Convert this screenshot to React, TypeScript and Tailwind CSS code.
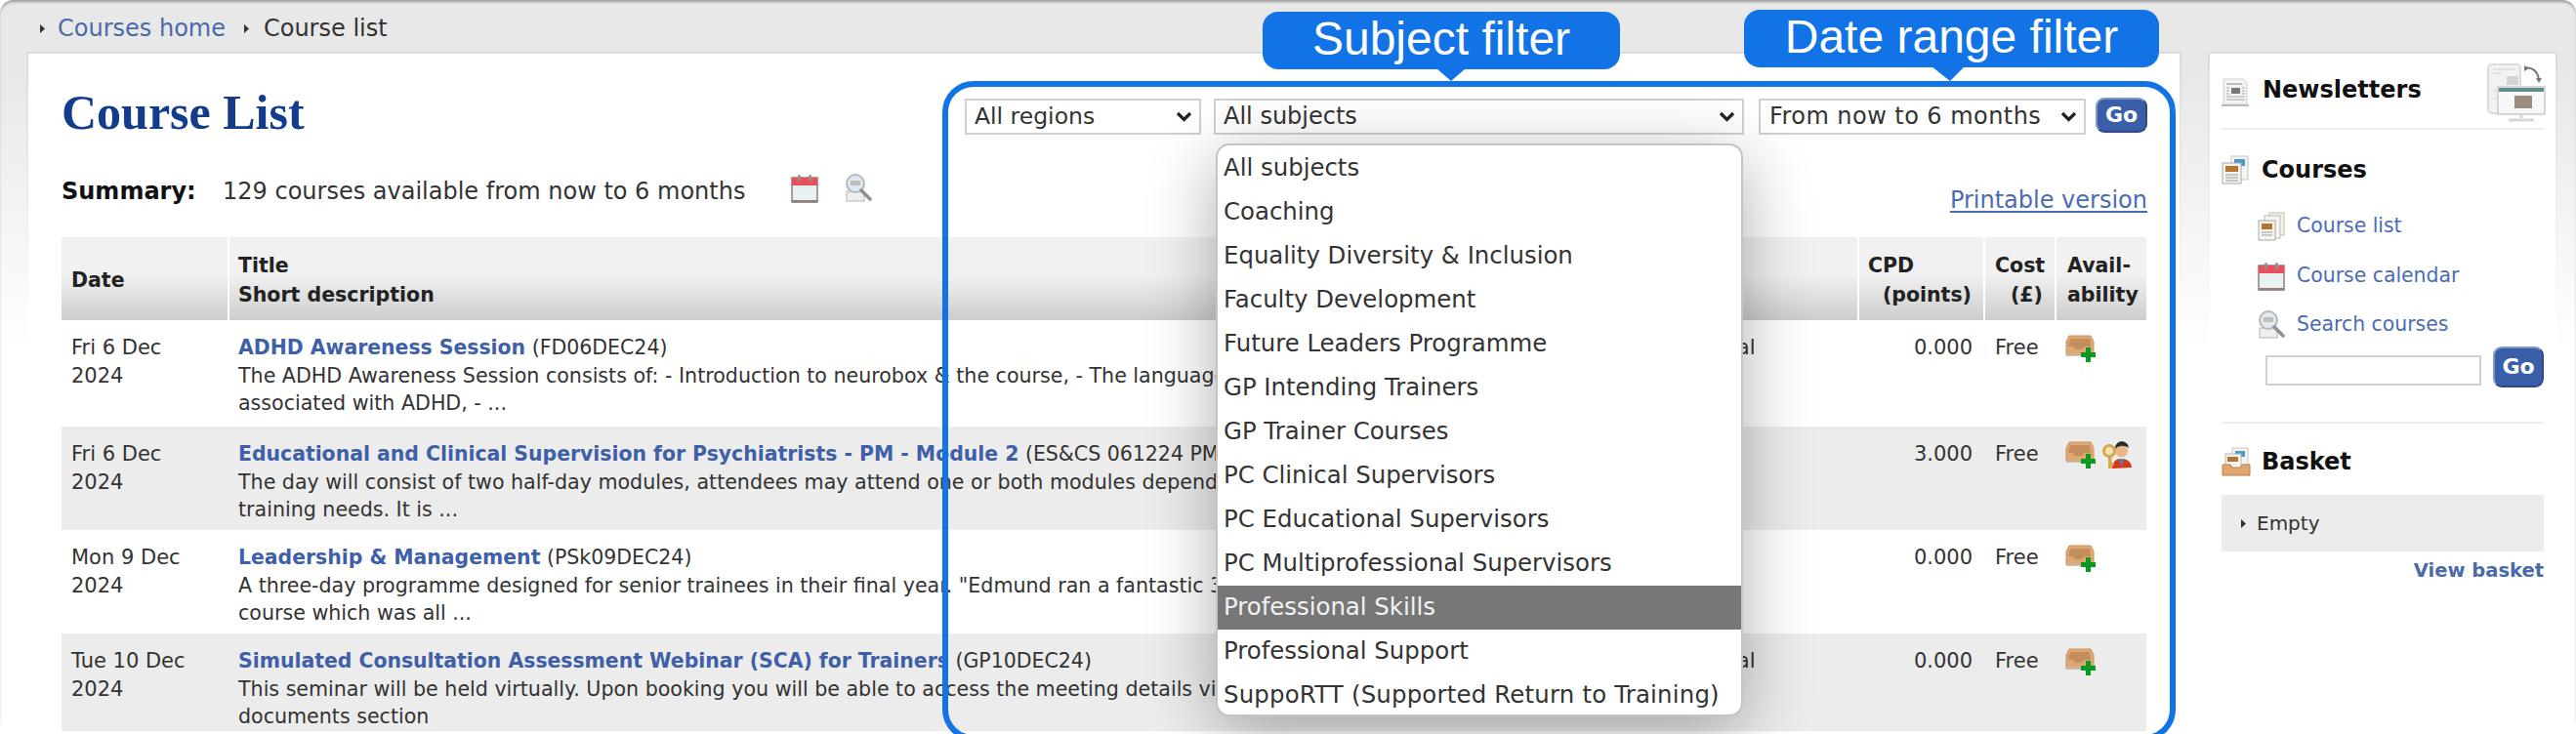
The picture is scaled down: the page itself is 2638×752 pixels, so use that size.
import React from "react";

const CalendarIcon = () => (
  <svg width="28" height="30" viewBox="0 0 28 30" className="block">
    <rect x="1" y="4" width="26" height="25" fill="#eaf1f1" stroke="#8f7f7d" strokeWidth="1.5" />
    <rect x="1" y="4" width="26" height="8" fill="#e8505b" />
    <rect x="7" y="1" width="3" height="7" rx="1.5" fill="#9a8d8d" />
    <rect x="18" y="1" width="3" height="7" rx="1.5" fill="#9a8d8d" />
    <rect x="1" y="27" width="26" height="2.5" fill="#8f7f7d" />
  </svg>
);

const SearchIcon = () => (
  <svg width="28" height="30" viewBox="0 0 28 30" className="block">
    <rect x="2" y="18" width="18" height="10" fill="#eeeeee" stroke="#b5b5b5" />
    <circle cx="11" cy="10" r="9" fill="#dfe9f1" stroke="#b4b9bd" strokeWidth="2" />
    <rect x="6" y="7" width="10" height="5" fill="#bfbfb8" />
    <path d="M17 17 L26 26" stroke="#8d9295" strokeWidth="3.5" strokeLinecap="round" />
  </svg>
);

const TrayAdd = () => (
  <svg width="31" height="28" viewBox="0 0 31 28" className="block">
    <path d="M4 1 H26 L29 7 V21 H1 V7 Z" fill="#dfa873" stroke="#c99260" />
    <path d="M5 4 H25 L26 12 H19 L17 15 H10 L8 12 H3 Z" fill="#b98454" opacity="0.75" />
    <rect x="1" y="19" width="28" height="3" fill="#c4c0bb" opacity="0.5" />
    <rect x="21" y="13" width="5" height="15" fill="#0a9a22" />
    <rect x="16" y="18" width="15" height="5" fill="#0a9a22" />
  </svg>
);

const PersonKey = () => (
  <svg width="30" height="30" viewBox="0 0 30 30" className="block">
    <path d="M10 29 C10 22 14 19 19 19 C26 19 30 23 30 28 Z" fill="#d8381a" />
    <path d="M17 19 L19.5 27 L22 19 Z" fill="#4a86c8" />
    <circle cx="19.5" cy="11" r="6.5" fill="#eab788" />
    <path d="M13 9 C13 -1 26 -1 27 8 C23 5 17 5 13 9 Z" fill="#2b2b2b" />
    <circle cx="7" cy="11" r="5.5" fill="#f3e2b0" stroke="#d3a94f" strokeWidth="3" />
    <rect x="6" y="15" width="3.5" height="14" fill="#d3a94f" />
    <rect x="9" y="23" width="3" height="3" fill="#d3a94f" />
  </svg>
);

const Newspaper = () => (
  <svg width="28" height="29" viewBox="0 0 28 29" className="block">
    <path d="M2 1 H22 L26 5 V27 H2 Z" fill="#f3f3f1" stroke="#cfcfcb" />
    <rect x="5" y="5" width="16" height="2" fill="#bdbdb8" />
    <rect x="10" y="10" width="9" height="6" fill="#777" />
    <path d="M5 10 H8 M5 13 H8 M5 16 H8 M21 10 H24 M21 13 H24 M21 16 H24 M5 19 H24 M5 22 H24" stroke="#c2c2bd" strokeWidth="1.5" />
    <rect x="0" y="27" width="28" height="2" fill="#bcbcb8" />
  </svg>
);

const CoursesIcon = () => (
  <svg width="28" height="30" viewBox="0 0 28 30" className="block">
    <rect x="10" y="1" width="17" height="24" fill="#f4f4f2" stroke="#c6c6c2" />
    <rect x="13" y="4" width="11" height="7" fill="#4b9ac9" />
    <rect x="1" y="8" width="19" height="21" fill="#f4f4f2" stroke="#a9a9a5" />
    <rect x="4" y="11" width="13" height="6" fill="#b5742f" />
    <path d="M4 20 H17 M4 23 H17 M4 26 H17" stroke="#b8b8b3" strokeWidth="1.5" />
  </svg>
);

const CourseListIcon = () => (
  <svg width="28" height="30" viewBox="0 0 28 30" className="block">
    <rect x="12" y="1" width="15" height="23" fill="#f4f1ea" stroke="#c9bba5" />
    <rect x="7" y="4" width="16" height="23" fill="#f4f4f2" stroke="#bcbcb8" />
    <rect x="1" y="9" width="17" height="20" fill="#f4f4f2" stroke="#a9a9a5" />
    <rect x="4" y="12" width="11" height="6" fill="#b5742f" />
    <path d="M4 21 H15 M4 24 H15" stroke="#b8b8b3" strokeWidth="1.5" />
  </svg>
);

const BasketIcon = () => (
  <svg width="30" height="30" viewBox="0 0 30 30" className="block">
    <rect x="11" y="1" width="16" height="20" fill="#f4f4f2" stroke="#c6c6c2" />
    <rect x="14" y="4" width="10" height="6" fill="#4b9ac9" />
    <rect x="4" y="7" width="16" height="16" fill="#f4f4f2" stroke="#b4b4af" />
    <rect x="6" y="10" width="11" height="5" fill="#b5742f" />
    <path d="M1 18 H9 L11 21 H19 L21 18 H29 V29 H1 Z" fill="#e0a772" stroke="#bd7f47" />
  </svg>
);

const MonitorSwap = () => (
  <svg width="60" height="60" viewBox="0 0 60 60" className="block">
    <rect x="1" y="1" width="33" height="50" rx="4" fill="#f2f2f2" stroke="#dcdcdc" strokeWidth="2" />
    <rect x="20" y="13" width="12" height="9" fill="#d4d4d4" />
    <path d="M6 6 H29 M6 10 H14 M6 28 H10 M6 36 H10" stroke="#dddddd" strokeWidth="1.5" />
    <rect x="11" y="24" width="48" height="28" fill="#f8f8f8" stroke="#d6d6d6" strokeWidth="2" />
    <rect x="12" y="25" width="46" height="4" fill="#5f8f8c" />
    <rect x="28" y="33" width="18" height="13" fill="#9a8d80" />
    <path d="M35 52 V56 M22 58 H48" stroke="#d6d6d6" strokeWidth="3" />
    <path d="M38 5 C46 3 52 8 53 17" stroke="#777" strokeWidth="2" fill="none" />
    <path d="M38 2 L38 8 L43 5 Z M50 15 H56 L53 20 Z" fill="#777" />
  </svg>
);

const Tri = () => (
  <svg width="5" height="9" viewBox="0 0 5 9" className="block shrink-0">
    <path d="M0 0 L5 4.5 L0 9 Z" fill="#333" />
  </svg>
);

const Chevron = () => (
  <svg width="17" height="11" viewBox="0 0 17 11" className="absolute right-[9px] top-[13px] pointer-events-none">
    <path d="M2 2 L8.5 8.5 L15 2" fill="none" stroke="#222" strokeWidth="3.2" />
  </svg>
);

function Select({ value, className, text }: { value: string; className: string; text: string }) {
  return (
    <div className={`relative h-[37px] ${className}`}>
      <select
        defaultValue={value}
        className={`w-full h-full appearance-none bg-white border-2 border-[#d0d0d0] text-[#333] font-['DejaVu_Sans',sans-serif] ${text}`}
      >
        <option>{value}</option>
      </select>
      <Chevron />
    </div>
  );
}

function GoButton({ className }: { className: string }) {
  return (
    <button className={`bg-[#3a5fa8] rounded-[9px] border-2 border-[#7d97c9] border-b-[#2d4a86] border-r-[#2d4a86] text-white font-bold text-[22px] leading-none ${className}`}>
      Go
    </button>
  );
}

type Row = {
  date: string;
  title: string;
  code: string;
  desc: [string, string];
  region: string;
  cpd: string;
  alt: boolean;
  key: boolean;
  h: string;
};

const rows: Row[] = [
  {
    date: "Fri 6 Dec",
    title: "ADHD Awareness Session",
    code: "(FD06DEC24)",
    desc: ["The ADHD Awareness Session consists of: - Introduction to neurobox & the course, - The language", "associated with ADHD, - ..."],
    region: "National",
    cpd: "0.000",
    alt: false,
    key: false,
    h: "h-[109px]",
  },
  {
    date: "Fri 6 Dec",
    title: "Educational and Clinical Supervision for Psychiatrists - PM - Module 2",
    code: "(ES&CS 061224 PM)",
    desc: ["The day will consist of two half-day modules, attendees may attend one or both modules depending on their", "training needs. It is ..."],
    region: "",
    cpd: "3.000",
    alt: true,
    key: true,
    h: "h-[106px]",
  },
  {
    date: "Mon 9 Dec",
    title: "Leadership & Management",
    code: "(PSk09DEC24)",
    desc: ["A three-day programme designed for senior trainees in their final year. \"Edmund ran a fantastic 3-day", "course which was all ..."],
    region: "",
    cpd: "0.000",
    alt: false,
    key: false,
    h: "h-[106px]",
  },
  {
    date: "Tue 10 Dec",
    title: "Simulated Consultation Assessment Webinar (SCA) for Trainers",
    code: "(GP10DEC24)",
    desc: ["This seminar will be held virtually. Upon booking you will be able to access the meeting details via", "documents section"],
    region: "National",
    cpd: "0.000",
    alt: true,
    key: false,
    h: "h-[100px]",
  },
];

const subjects = [
  "All subjects",
  "Coaching",
  "Equality Diversity & Inclusion",
  "Faculty Development",
  "Future Leaders Programme",
  "GP Intending Trainers",
  "GP Trainer Courses",
  "PC Clinical Supervisors",
  "PC Educational Supervisors",
  "PC Multiprofessional Supervisors",
  "Professional Skills",
  "Professional Support",
  "SuppoRTT (Supported Return to Training)",
];

const cols = "grid grid-cols-[170px_1455px_210px_127px_71px_92px] gap-x-[2px]";
const headCell = "bg-gradient-to-b from-[#f1f1f1] from-45% to-[#cdcdcd] h-[85px] font-bold text-[#222] text-[20.5px] leading-[30px]";

export default function App() {
  return (
    <div className="relative w-[2638px] h-[752px] overflow-hidden bg-white font-['DejaVu_Sans',sans-serif] text-[20.6px] leading-[28.5px] text-[#333]">
      <div className="h-full rounded-[14px] overflow-hidden bg-gradient-to-b from-[#e8e8e8] from-10% to-white to-[48%] shadow-[inset_0_3px_3px_-1px_#9a9a9a]">
        {/* Breadcrumb */}
        <div className="h-[53px] pl-[41px] pt-[5px] flex items-center text-[24px]">
          <Tri />
          <a className="text-[#4a6aa8] ml-[13px] mr-[19px]">Courses home</a>
          <Tri />
          <span className="ml-[15px]">Course list</span>
        </div>

        <div className="flex pl-[27px] gap-[27px] h-[699px]">
          {/* Main */}
          <div className="w-[2207px] p-[2px] pb-0 bg-gradient-to-b from-[#dcdcdc] to-white to-[42%]">
            <div className="bg-white h-full px-[34px] overflow-hidden">
              <div className="h-[115px] flex justify-between items-start">
                <h1 className="font-['Liberation_Serif',serif] font-bold text-[50px] leading-[60px] text-[#143c8c] mt-[30px] mb-0">Course List</h1>
                <div className="flex items-start mt-[46px] mr-[-1px]">
                  <Select value="All regions" className="w-[242px] mr-[13px]" text="pl-[8px] text-[23.5px]" />
                  <Select value="All subjects" className="w-[543px] mr-[15px]" text="pl-[8px] text-[24px]" />
                  <Select value="From now to 6 months" className="w-[335px] mr-[10px]" text="pl-[9px] text-[24px] tracking-[0.45px]" />
                  <GoButton className="w-[53px] h-[36px] -mt-[1px]" />
                </div>
              </div>

              <div className="h-[73px] flex justify-between items-start text-[24px]">
                <div className="flex items-start pt-[12px]">
                  <b className="w-[165px] text-[#111]">Summary:</b>
                  <span className="w-[582px]">129 courses available from now to 6 months</span>
                  <span className="-mt-[4px] mr-[27px]"><CalendarIcon /></span>
                  <span className="-mt-[4px]"><SearchIcon /></span>
                </div>
                <a className="mt-[21px] mr-[-1px] text-[#4a6cb4] underline underline-offset-[3px]">Printable version</a>
              </div>

              {/* Table head */}
              <div className={cols}>
                <div className={`${headCell} pl-[10px] pt-[3px] flex items-center`}>Date</div>
                <div className={`${headCell} pl-[9px] pt-[14px]`}>Title<br />Short description</div>
                <div className={headCell} />
                <div className={`${headCell} pl-[9px] pr-[12px] pt-[14px]`}>CPD<div className="text-right">(points)</div></div>
                <div className={`${headCell} pl-[10px] pr-[12px] pt-[14px]`}>Cost<div className="text-right">(£)</div></div>
                <div className={`${headCell} pl-[11px] pt-[14px]`}>Avail-<br />ability</div>
              </div>

              {/* Rows */}
              {rows.map((r, i) => (
                <div key={i} className={`${cols} ${r.h} pt-[14px] ${r.alt ? "bg-[#ececec]" : "bg-white"}`}>
                  <div className="pl-[10px] text-[21px]">{r.date}<br />2024</div>
                  <div className="pl-[9px] whitespace-nowrap overflow-hidden">
                    <a className="font-bold text-[20.4px] text-[#3f5fa8]">{r.title}</a> <span className="text-[20.5px]">{r.code}</span>
                    <br />{r.desc[0]}
                    <br />{r.desc[1]}
                  </div>
                  <div className="pl-[18px] text-[21px]">{r.region}</div>
                  <div className="text-right pr-[11px] text-[21px]">{r.cpd}</div>
                  <div className="pl-[10px] text-[21px]">Free</div>
                  <div className="pl-[9px] flex items-start gap-[7px]">
                    <span className="mt-[1px]"><TrayAdd /></span>
                    {r.key && <PersonKey />}
                  </div>
                </div>
              ))}
            </div>
          </div>

          {/* Sidebar */}
          <div className="w-[358px] p-[2px] pb-0 bg-gradient-to-b from-[#dcdcdc] to-white to-[42%] self-stretch">
            <div className="bg-white h-full px-[12px] text-[20.4px]">
              <div className="relative h-[78px] pt-[25px] border-b-2 border-[#eeeeee] flex items-start gap-[14px]">
                <Newspaper />
                <b className="text-[24px] text-[#111] leading-[24px]">Newsletters</b>
                <span className="absolute right-[-2px] top-[10px]"><MonitorSwap /></span>
              </div>
              <div className="mt-[26px] flex items-center gap-[13px] h-[30px]">
                <CoursesIcon />
                <b className="text-[24px] text-[#111]">Courses</b>
              </div>
              <div className="mt-[28px] ml-[37px] flex items-start gap-[12px] h-[30px] text-[#4a6cb4]">
                <CourseListIcon /><a>Course list</a>
              </div>
              <div className="mt-[21px] ml-[37px] flex items-start gap-[12px] h-[30px] text-[#4a6cb4]">
                <CalendarIcon /><a>Course calendar</a>
              </div>
              <div className="mt-[20px] ml-[37px] flex items-start gap-[12px] h-[30px] text-[#4a6cb4]">
                <SearchIcon /><a>Search courses</a>
              </div>
              <div className="mt-[7px] ml-[45px] flex justify-between items-start">
                <input className="w-[221px] h-[31px] mt-[9px] bg-white border-2 border-[#d0d0d0]" />
                <GoButton className="w-[52px] h-[42px]" />
              </div>
              <div className="mt-[35px] border-t-2 border-[#eeeeee]" />
              <div className="mt-[24px] flex items-center gap-[11px] h-[30px]">
                <BasketIcon />
                <b className="text-[24px] text-[#111]">Basket</b>
              </div>
              <div className="mt-[19px] h-[58px] bg-[#ececec] pl-[20px] flex items-center gap-[11px]">
                <Tri /><span className="text-[20px]">Empty</span>
              </div>
              <div className="mt-[6px] text-right font-bold text-[19.5px] text-[#4a6aa8]">View basket</div>
            </div>
          </div>
        </div>
      </div>

      {/* Annotation frame */}
      <div className="absolute left-[965px] top-[83px] w-[1263px] h-[676px] border-[6px] border-[#1273e6] rounded-[32px] pointer-events-none" />

      {/* Callouts */}
      <div className="absolute left-[1293px] top-[12px] w-[366px] h-[59px] pb-[4px] bg-[#1273e6] rounded-[16px] flex items-center justify-center text-white font-['Liberation_Sans',sans-serif] text-[48px] leading-none">
        Subject filter
        <svg width="30" height="13" viewBox="0 0 30 13" className="absolute left-[178px] top-[58px]">
          <path d="M0 0 H30 L15 13 Z" fill="#1273e6" />
        </svg>
      </div>
      <div className="absolute left-[1786px] top-[10px] w-[425px] h-[59px] pb-[4px] bg-[#1273e6] rounded-[16px] flex items-center justify-center text-white font-['Liberation_Sans',sans-serif] text-[48px] leading-none">
        Date range filter
        <svg width="34" height="15" viewBox="0 0 34 15" className="absolute left-[192px] top-[58px]">
          <path d="M0 0 H34 L19 15 Z" fill="#1273e6" />
        </svg>
      </div>

      {/* Open dropdown */}
      <div className="absolute left-[1245px] top-[147px] w-[540px] h-[587px] pt-[1px] bg-white border-2 border-[#c4c4c4] rounded-[14px] overflow-hidden shadow-[0_16px_70px_rgba(0,0,0,0.32)] text-[24.4px]">
        {subjects.map((s) => (
          <div
            key={s}
            className={`h-[45px] pl-[6px] flex items-center whitespace-nowrap ${s === "Professional Skills" ? "bg-[#777777] text-[#f2f2f2]" : "text-[#333]"} ${s.startsWith("SuppoRTT") ? "tracking-[0.2px]" : ""}`}
          >
            {s}
          </div>
        ))}
      </div>
    </div>
  );
}
